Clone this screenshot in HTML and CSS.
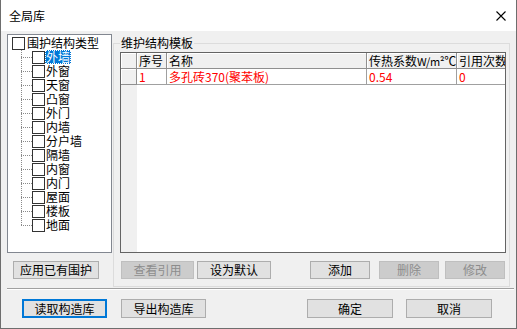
FILE: index.html
```html
<!DOCTYPE html>
<html lang="zh-CN">
<head>
<meta charset="utf-8">
<title>全局库</title>
<link rel="stylesheet" href="styles.css">
</head>
<body>
<div class="window">
  <div class="titlebar">
    <span class="title">全局库</span>
    <svg class="close" width="10" height="10" viewBox="0 0 10 10"><path d="M0.5 0.5 L9.5 9.5 M9.5 0.5 L0.5 9.5" stroke="#000" stroke-width="1.1" fill="none"/></svg>
  </div>
  <div class="main">
    <div class="leftcol">
      <div class="tree">
        <div class="row root"><span class="cb"></span><span class="lbl">围护结构类型</span></div>
        <ul class="children">
          <li class="row"><span class="conn"></span><span class="cb"></span><span class="lbl sel">外墙</span></li>
          <li class="row"><span class="conn"></span><span class="cb"></span><span class="lbl">外窗</span></li>
          <li class="row"><span class="conn"></span><span class="cb"></span><span class="lbl">天窗</span></li>
          <li class="row"><span class="conn"></span><span class="cb"></span><span class="lbl">凸窗</span></li>
          <li class="row"><span class="conn"></span><span class="cb"></span><span class="lbl">外门</span></li>
          <li class="row"><span class="conn"></span><span class="cb"></span><span class="lbl">内墙</span></li>
          <li class="row"><span class="conn"></span><span class="cb"></span><span class="lbl">分户墙</span></li>
          <li class="row"><span class="conn"></span><span class="cb"></span><span class="lbl">隔墙</span></li>
          <li class="row"><span class="conn"></span><span class="cb"></span><span class="lbl">内窗</span></li>
          <li class="row"><span class="conn"></span><span class="cb"></span><span class="lbl">内门</span></li>
          <li class="row"><span class="conn"></span><span class="cb"></span><span class="lbl">屋面</span></li>
          <li class="row"><span class="conn"></span><span class="cb"></span><span class="lbl">楼板</span></li>
          <li class="row last"><span class="conn"></span><span class="cb"></span><span class="lbl">地面</span></li>
        </ul>
      </div>
      <button class="btn b-apply">应用已有围护</button>
    </div>
    <div class="group">
      <span class="legend">维护结构模板</span>
      <div class="grid">
        <div class="grow head">
          <div class="cell rh"></div>
          <div class="cell c1">序号</div>
          <div class="cell c2">名称</div>
          <div class="cell c3">传热系数<span class="unit">W/m²</span>℃</div>
          <div class="cell c4">引用次数</div>
        </div>
        <div class="grow data">
          <div class="cell rh"></div>
          <div class="cell c1">1</div>
          <div class="cell c2">多孔砖370(聚苯板)</div>
          <div class="cell c3">0.54</div>
          <div class="cell c4">0</div>
        </div>
      </div>
      <div class="gbtns">
        <button class="btn b-view" disabled>查看引用</button>
        <button class="btn b-def">设为默认</button>
        <button class="btn b-add">添加</button>
        <button class="btn b-del" disabled>删除</button>
        <button class="btn b-mod" disabled>修改</button>
      </div>
    </div>
  </div>
  <div class="sep"></div>
  <div class="footer">
    <button class="btn default b-read">读取构造库</button>
    <button class="btn b-export">导出构造库</button>
    <button class="btn b-ok">确定</button>
    <button class="btn b-cancel">取消</button>
  </div>
</div>
</body>
</html>
```

FILE: styles.css
```css
* { box-sizing: border-box; margin: 0; padding: 0; }
html, body { width: 517px; height: 329px; overflow: hidden; }
body {
  margin: 0;
  font: 12px/14px "Noto Sans CJK SC", "Noto Sans", sans-serif;
  color: #000;
  background: #fff;
}
.window {
  width: 517px;
  height: 329px;
  border: 1px solid #6e6e6e;
  border-top: 0;
  background: #f0f0f0;
  display: flex;
  flex-direction: column;
}
.titlebar {
  flex: none;
  height: 31px;
  background: #fff;
  display: flex;
  align-items: center;
  justify-content: space-between;
  padding: 0 10px 0 8px;
}
.title { line-height: 14px; }
.close { display: block; }

.main {
  flex: none;
  display: flex;
  align-items: flex-start;
  padding: 3px 0 0 6px;
}
.leftcol { width: 105px; display: flex; flex-direction: column; }
.tree {
  width: 105px;
  height: 219px;
  border: 1px solid #828790;
  background: #fff;
  padding: 1px 0 0 4px;
}
.row { display: flex; align-items: center; height: 14px; list-style: none; }
.children { padding-left: 9px; }
.cb {
  flex: none;
  width: 13px;
  height: 13px;
  border: 1px solid #333;
  background: #fff;
}
.root .lbl { margin-left: 1px; }
.lbl { padding: 0 1px; height: 14px; line-height: 14px; white-space: nowrap; }
.lbl.sel { background: #0078d7; color: #fff; outline: 1px dotted #fff; outline-offset: -1px; }
.conn {
  flex: none;
  width: 11px;
  height: 14px;
  background:
    repeating-linear-gradient(to bottom, #8a8a8a 0 1px, transparent 1px 2px) 0 0 / 1px 14px no-repeat,
    repeating-linear-gradient(to right, #8a8a8a 0 1px, transparent 1px 2px) 0 7px / 11px 1px no-repeat;
}
.last .conn { background-size: 1px 8px, 11px 1px; }

.btn {
  font: inherit;
  line-height: 14px;
  height: 18px;
  padding: 0;
  color: #000;
  background: #e1e1e1;
  border: 1px solid #adadad;
  display: flex;
  align-items: center;
  justify-content: center;
  flex: none;
}
.btn:disabled { background: #cccccc; border-color: #bfbfbf; color: #8c8c8c; }
.btn.default { border: 2px solid #0078d7; }
.b-apply { margin: 8px 0 0 6px; width: 86px; }

.group {
  position: relative;
  margin: 9px 0 0 1px;
  width: 397px;
  height: 244px;
  border: 1px solid #dcdcdc;
  padding: 8px 3px 0 6px;
}
.legend {
  position: absolute;
  top: -8px;
  left: 6px;
  padding: 0 1px;
  background: #f0f0f0;
  line-height: 14px;
}
.grid {
  width: 386px;
  height: 201px;
  border: 1px solid #646464;
  background: linear-gradient(to right, #f0f0f0 16px, #fff 16px);
  overflow: hidden;
}
.grow { display: flex; height: 16px; width: 420px; }
.cell {
  flex: none;
  height: 16px;
  line-height: 15px;
  padding-left: 2px;
  white-space: nowrap;
  overflow: hidden;
}
.rh { width: 16px; }
.c1 { width: 30px; }
.c2 { width: 200px; }
.c3 { width: 90px; }
.c4 { width: 84px; }
.unit { font-size: 11px; letter-spacing: -0.3px; }
.head .cell, .data .rh {
  background: #f0f0f0;
  border-right: 1px solid #8f8f8f;
  border-bottom: 1px solid #8f8f8f;
  box-shadow: inset 1px 1px 0 #fff;
}
.data .cell:not(.rh) {
  color: #ff0000;
  background: #fff;
  border-right: 1px solid #a0a0a0;
  border-bottom: 1px solid #a0a0a0;
}

.gbtns { display: flex; margin-top: 8px; }
.b-view { margin-left: 1px; width: 73px; }
.b-def { margin-left: 3px; width: 74px; }
.b-add { margin-left: 39px; width: 60px; }
.b-del { margin-left: 9px; width: 60px; }
.b-mod { margin-left: 6px; width: 60px; }

.sep {
  flex: none;
  margin: 1px 2px 0 6px;
  height: 2px;
  border-top: 1px solid #a0a0a0;
  border-bottom: 1px solid #fff;
}
.footer { display: flex; padding: 9px 0 0 21px; }
.footer .btn { height: 19px; }
.b-read { width: 85px; }
.b-export { margin-left: 14px; width: 85px; }
.b-ok { margin-left: 101px; width: 86px; }
.b-cancel { margin-left: 13px; width: 86px; }
```
